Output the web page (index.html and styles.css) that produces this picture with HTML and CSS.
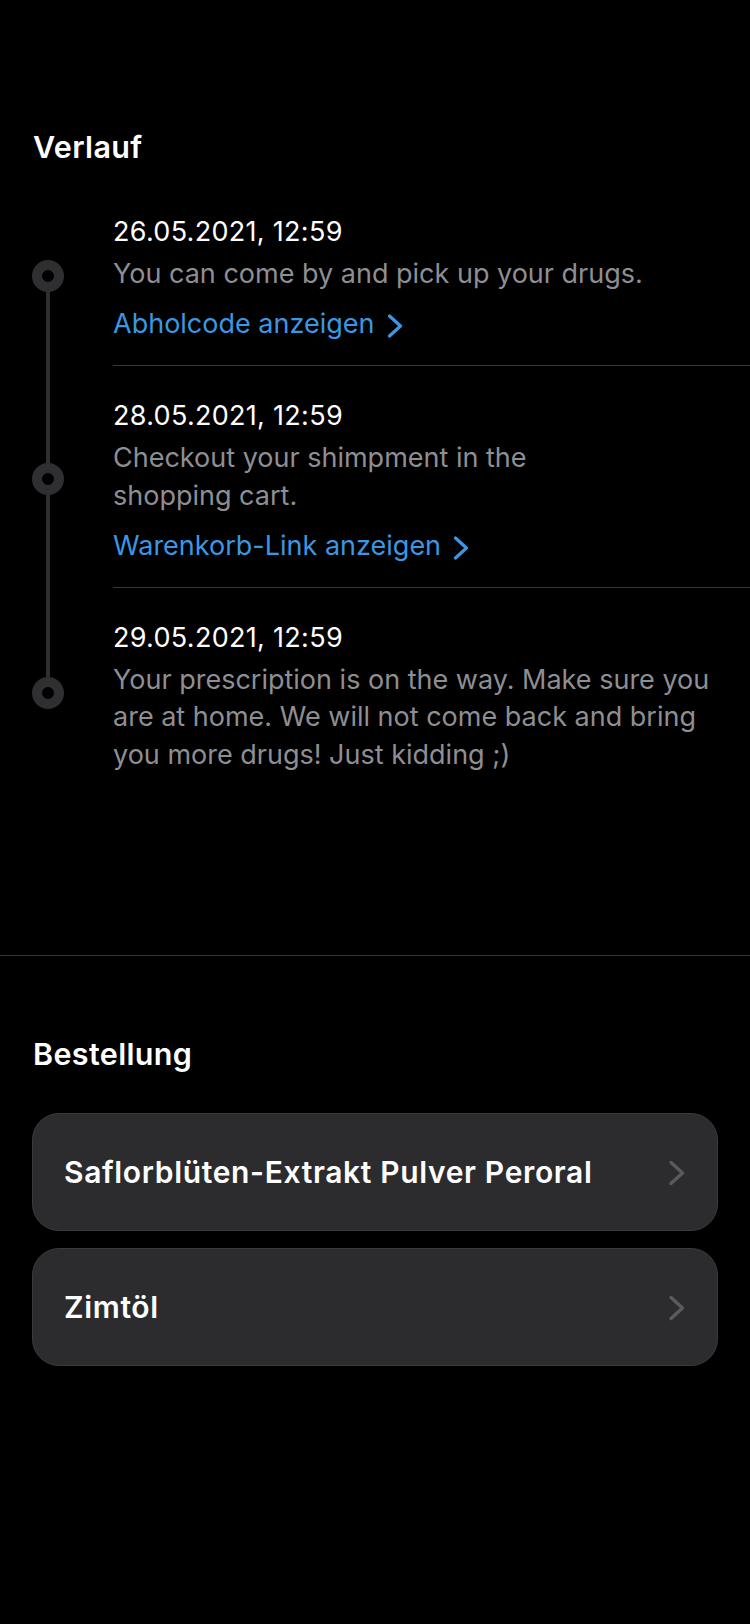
FILE: index.html
```html
<!DOCTYPE html>
<html lang="de">
<head>
<meta charset="utf-8">
<title>Verlauf</title>
<link rel="stylesheet" href="styles.css">
</head>
<body>
<main class="page">
  <section class="history">
    <h2 class="section-title">Verlauf</h2>
    <ol class="timeline">
      <li class="event event--first">
        <div class="rail"><span class="seg seg--top"></span><span class="dot"></span><span class="seg seg--bottom"></span></div>
        <div class="event-body">
          <p class="event-date">26.05.2021, 12:59</p>
          <p class="event-text">You can come by and pick up your drugs.</p>
          <a class="event-link" href="#">Abholcode anzeigen<svg class="link-chevron" width="16" height="24" viewBox="0 0 16 24" aria-hidden="true"><polyline points="2.5,2 13.5,12 2.5,22" fill="none" stroke="currentColor" stroke-width="3.2" stroke-linecap="round" stroke-linejoin="round"/></svg></a>
        </div>
      </li>
      <li class="event">
        <div class="rail"><span class="seg seg--top"></span><span class="dot"></span><span class="seg seg--bottom"></span></div>
        <div class="event-body">
          <p class="event-date">28.05.2021, 12:59</p>
          <p class="event-text">Checkout your shimpment in the<br>shopping cart.</p>
          <a class="event-link" href="#">Warenkorb-Link anzeigen<svg class="link-chevron" width="16" height="24" viewBox="0 0 16 24" aria-hidden="true"><polyline points="2.5,2 13.5,12 2.5,22" fill="none" stroke="currentColor" stroke-width="3.2" stroke-linecap="round" stroke-linejoin="round"/></svg></a>
        </div>
      </li>
      <li class="event event--last">
        <div class="rail"><span class="seg seg--top"></span><span class="dot"></span><span class="seg seg--bottom"></span></div>
        <div class="event-body">
          <p class="event-date">29.05.2021, 12:59</p>
          <p class="event-text">Your prescription is on the way. Make sure you are at home. We will not come back and bring you more drugs! Just kidding ;)</p>
        </div>
      </li>
    </ol>
  </section>
  <hr class="section-divider">
  <section class="order">
    <h2 class="section-title">Bestellung</h2>
    <ul class="order-list">
      <li>
        <a class="order-card" href="#">
          <span class="order-name">Saflorblüten-Extrakt Pulver Peroral</span>
          <svg class="card-chevron" width="20" height="26" viewBox="0 0 20 26" aria-hidden="true"><polyline points="4,2.5 15.5,13 4,23.5" fill="none" stroke="currentColor" stroke-width="3.4" stroke-linecap="round" stroke-linejoin="round"/></svg>
        </a>
      </li>
      <li>
        <a class="order-card" href="#">
          <span class="order-name">Zimtöl</span>
          <svg class="card-chevron" width="20" height="26" viewBox="0 0 20 26" aria-hidden="true"><polyline points="4,2.5 15.5,13 4,23.5" fill="none" stroke="currentColor" stroke-width="3.4" stroke-linecap="round" stroke-linejoin="round"/></svg>
        </a>
      </li>
    </ul>
  </section>
</main>
</body>
</html>
```
FILE: styles.css
```css
html, body {
  margin: 0;
  padding: 0;
  background: #000;
}

body {
  font-family: Inter, "Noto Sans", "Liberation Sans", sans-serif;
  color: #fff;
  width: 750px;
  min-height: 1624px;
}

.page {
  display: flex;
  flex-direction: column;
}

.section-title {
  margin: 0;
  font-size: 30.5px;
  line-height: 36px;
  font-weight: 600;
  letter-spacing: 0.35px;
  color: #fff;
}

/* ---------- Verlauf ---------- */
.history {
  padding: 129px 0 160px 33px;
}

.timeline {
  list-style: none;
  margin: 17px 0 0 -1px;
  padding: 0;
  display: flex;
  flex-direction: column;
}

.event {
  display: flex;
  gap: 49px;
}

.rail {
  width: 32px;
  flex: none;
  display: flex;
  flex-direction: column;
  align-items: center;
}

.seg {
  width: 4px;
  background: #2f2f31;
  flex: 1 1 0;
}

.seg--top {
  flex-basis: 4px;
}

.event--first .seg--top,
.event--last .seg--bottom {
  background: transparent;
}

.dot {
  flex: none;
  width: 32px;
  height: 32px;
  box-sizing: border-box;
  border-radius: 50%;
  border: 10px solid #2f2f31;
}

.event-body {
  flex: 1;
  min-width: 0;
  padding: 32px 16px 23px 0;
  border-bottom: 1px solid #38383a;
  display: flex;
  flex-direction: column;
  align-items: flex-start;
}

.event--last .event-body {
  border-bottom: none;
  padding-bottom: 22px;
}

.event-date {
  margin: 0;
  font-size: 27px;
  line-height: 36px;
  letter-spacing: 0.3px;
  color: #fff;
}

.event-text {
  margin: 5px 0 0;
  font-size: 27px;
  line-height: 37.5px;
  color: #8e8e93;
}

.event-link {
  margin-top: 13.5px;
  display: inline-flex;
  align-items: center;
  gap: 12px;
  font-size: 27px;
  line-height: 36px;
  color: #3b97e3;
  text-decoration: none;
}

.link-chevron {
  margin-top: 4px;
  flex: none;
}

.section-divider {
  margin: 0;
  border: none;
  border-top: 1px solid #38383a;
  height: 0;
}

/* ---------- Bestellung ---------- */
.order {
  padding: 80px 32px 0;
}

.order .section-title {
  padding-left: 1px;
}

.order-list {
  list-style: none;
  margin: 41px 0 0;
  padding: 0;
  display: flex;
  flex-direction: column;
  gap: 17px;
}

.order-card {
  box-sizing: border-box;
  height: 118px;
  display: flex;
  align-items: center;
  justify-content: space-between;
  padding: 0 30px 0 31px;
  background: #2c2c2e;
  border: 1px solid #3a3a3c;
  border-radius: 27px;
  text-decoration: none;
  color: #fff;
}

.order-name {
  font-size: 30px;
  line-height: 36px;
  font-weight: 600;
  letter-spacing: 0.65px;
}

.card-chevron {
  flex: none;
  color: #5a5a5e;
  margin-top: 2px;
}
```
